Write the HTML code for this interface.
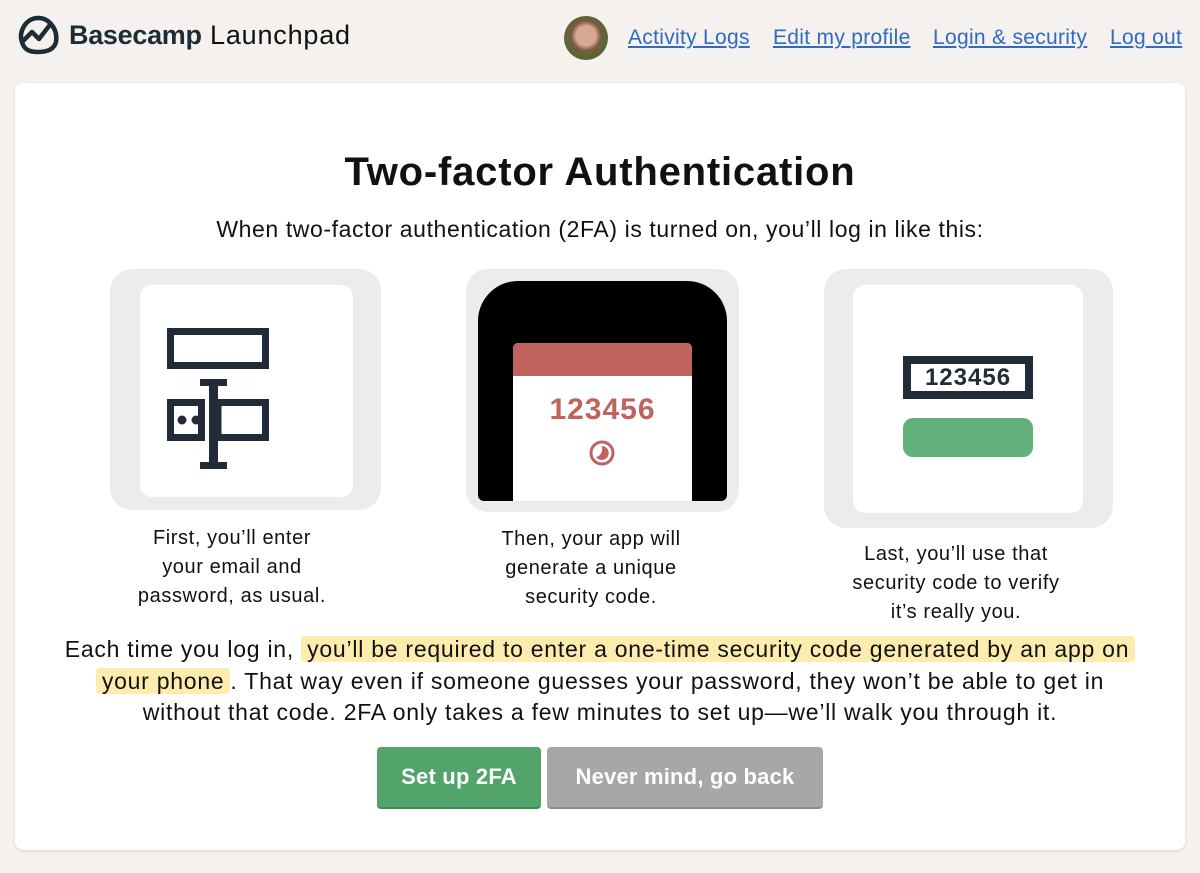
<!DOCTYPE html>
<html><head><meta charset="utf-8"><style>
body{margin:0;background:#f4f1ee;font-family:"Liberation Sans",sans-serif;color:#111;width:1200px;height:873px;overflow:hidden;position:relative}
.abs{position:absolute}
.nav a{color:#2d6cc0;text-decoration:underline;font-size:21px;letter-spacing:0.3px;position:absolute;top:26px}
.card{position:absolute;left:15px;top:83px;width:1170px;height:767px;background:#fff;border-radius:8px;box-shadow:0 1px 3px rgba(0,0,0,.12)}
.c{position:absolute;text-align:center;font-size:20px;letter-spacing:0.6px;line-height:29px;color:#111}
.box{position:absolute;background:#ececec;border-radius:22px}
.inner{position:absolute;background:#fff;border-radius:12px}
.btn{position:absolute;top:747px;height:60px;border-radius:4px;color:#fff;font-weight:bold;font-size:22px;letter-spacing:0.2px;line-height:60px;text-align:center}
mark{background:#fcecad;color:#111;padding:0 6px;border-radius:4px}
</style></head><body>
<svg class="abs" style="left:16px;top:14px" width="46" height="42" viewBox="0 0 46 42"><path d="M6 28 C2 18 10 4 22 4 C34 4 42 16 40 28 C38 36 30 38 22 38 C14 38 8 36 6 28 Z" fill="none" stroke="#1d2d35" stroke-width="4.5"/><path d="M7 27 L16 18 L23 25 L33 12" fill="none" stroke="#1d2d35" stroke-width="4.5" stroke-linejoin="round" stroke-linecap="round"/></svg>
<div class="abs" style="left:69px;top:20px;font-size:27px;font-weight:bold;color:#1d2d35;letter-spacing:-0.3px">Basecamp</div>
<div class="abs" style="left:210px;top:20px;font-size:27px;letter-spacing:0.8px;color:#111">Launchpad</div>
<div class="abs" style="left:564px;top:16px;width:44px;height:44px;border-radius:50%;background:radial-gradient(circle at 50% 45%,#d8a893 0 30%,#7a5a40 45%,#4f6a30 70%)"></div>
<div class="nav"><a style="left:628px">Activity Logs</a><a style="left:773px">Edit my profile</a><a style="left:933px">Login &amp; security</a><a style="left:1110px">Log out</a></div>
<div class="card"></div>
<div class="abs" style="left:0;width:1200px;top:150px;text-align:center;font-size:40px;letter-spacing:0.8px;font-weight:bold">Two-factor Authentication</div>
<div class="abs" style="left:0;width:1200px;top:216px;text-align:center;font-size:23px;letter-spacing:0.6px">When two-factor authentication (2FA) is turned on, you’ll log in like this:</div>

<div class="box" style="left:110px;top:269px;width:271px;height:241px"></div>
<div class="inner" style="left:140px;top:285px;width:213px;height:212px"></div>
<svg class="abs" style="left:160px;top:320px" width="120" height="150">
<g fill="none" stroke="#212c38" stroke-width="7"><rect x="10.5" y="11.5" width="95" height="34"/><rect x="10.5" y="82.5" width="31" height="35"/><rect x="58" y="82.5" width="47.5" height="35"/></g>
<circle cx="22" cy="100" r="4.5" fill="#212c38"/><circle cx="36" cy="100" r="4.5" fill="#212c38"/>
<path d="M40 59 h27 v7 h-9 v76 h9 v7 h-27 v-7 h9 v-76 h-9 z" fill="#212c38"/>
</svg>

<div class="box" style="left:466px;top:269px;width:273px;height:243px"></div>
<div class="abs" style="left:478px;top:281px;width:249px;height:220px;background:#000;border-radius:40px 40px 6px 6px"></div>
<div class="abs" style="left:513px;top:343px;width:179px;height:158px;background:#fff;border-radius:5px 5px 0 0"></div>
<div class="abs" style="left:513px;top:343px;width:179px;height:33px;background:#c0625e;border-radius:5px 5px 0 0"></div>
<div class="abs" style="left:513px;top:393px;width:179px;text-align:center;font-size:30px;font-weight:bold;color:#c0625e;letter-spacing:1px">123456</div>
<svg class="abs" style="left:587px;top:438px" width="30" height="30"><circle cx="15" cy="15" r="11" fill="none" stroke="#c0625e" stroke-width="3"/><path d="M15 8 A7 7 0 1 1 9 19 C14 18 16 13 15 8Z" fill="#c0625e"/></svg>

<div class="box" style="left:824px;top:269px;width:289px;height:259px"></div>
<div class="inner" style="left:853px;top:285px;width:230px;height:228px"></div>
<div class="abs" style="left:903px;top:356px;width:114px;height:27px;border:8px solid #212c38;text-align:center;font-size:24px;line-height:27px;font-weight:bold;color:#212c38;letter-spacing:1px">123456</div>
<div class="abs" style="left:903px;top:418px;width:130px;height:39px;background:#62b07a;border-radius:10px"></div>

<div class="c" style="left:102px;width:260px;top:524px">First, you’ll enter<br>your email and<br>password, as usual.</div>
<div class="c" style="left:461px;width:260px;top:525px">Then, your app will<br>generate a unique<br>security code.</div>
<div class="c" style="left:816px;width:280px;top:540px">Last, you’ll use that<br>security code to verify<br>it’s really you.</div>

<div class="abs" style="left:20px;width:1160px;top:634px;text-align:center;font-size:23px;letter-spacing:0.75px;line-height:31.5px">Each time you log in, <mark>you’ll be required to enter a one-time security code generated by an app on</mark><br><mark>your phone</mark>. That way even if someone guesses your password, they won’t be able to get in<br>without that code. 2FA only takes a few minutes to set up—we’ll walk you through it.</div>

<div class="btn" style="left:377px;width:164px;background:#52a46a;border-bottom:2px solid #3f8a55">Set up 2FA</div>
<div class="btn" style="left:547px;width:276px;background:#a7a7a7;border-bottom:2px solid #8d8d8d">Never mind, go back</div>
</body></html>
